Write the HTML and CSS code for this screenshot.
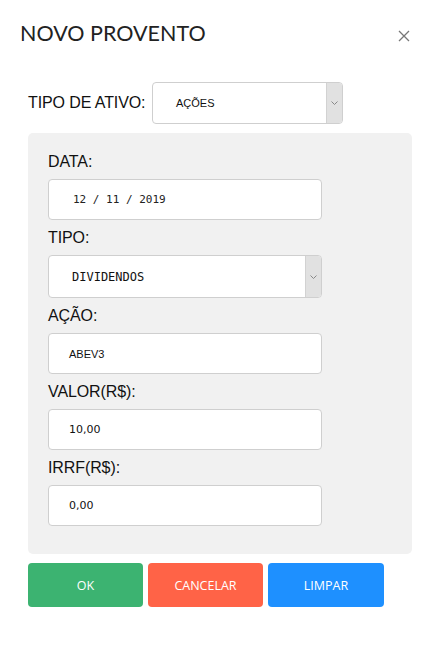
FILE: index.html
```html
<!DOCTYPE html>
<html lang="pt">
<head>
<meta charset="utf-8">
<title>Novo Provento</title>
<link rel="stylesheet" href="styles.css">
</head>
<body>
<div class="modal">
  <header class="head">
    <h1 class="title">NOVO PROVENTO</h1>
    <button class="close" aria-label="Fechar">
      <svg width="12" height="12" viewBox="0 0 12 12"><path d="M1 1L11 11M11 1L1 11" stroke="#777" stroke-width="1.3" fill="none"/></svg>
    </button>
  </header>
  <div class="body">
    <div class="tipo-row">
      <span class="tipo-label">TIPO DE ATIVO:</span>
      <div class="select select-top">
        <span class="select-text sans">AÇÕES</span>
        <span class="arrow"><svg width="7" height="4" viewBox="0 0 7 4"><path d="M0.5 0.5L3.5 3.5L6.5 0.5" stroke="#888" stroke-width="1" fill="none"/></svg></span>
      </div>
    </div>
    <section class="panel">
      <label class="lbl">DATA:</label>
      <div class="field date">12 / 11 / 2019</div>
      <label class="lbl">TIPO:</label>
      <div class="select select-panel">
        <span class="select-text mono">DIVIDENDOS</span>
        <span class="arrow"><svg width="7" height="4" viewBox="0 0 7 4"><path d="M0.5 0.5L3.5 3.5L6.5 0.5" stroke="#888" stroke-width="1" fill="none"/></svg></span>
      </div>
      <label class="lbl">AÇÃO:</label>
      <div class="field text-arial">ABEV3</div>
      <label class="lbl">VALOR(R$):</label>
      <div class="field text-num">10,00</div>
      <label class="lbl">IRRF(R$):</label>
      <div class="field text-num last">0,00</div>
    </section>
    <div class="actions">
      <button class="btn ok">OK</button>
      <button class="btn cancel">CANCELAR</button>
      <button class="btn clear">LIMPAR</button>
    </div>
  </div>
</div>
</body>
</html>
```

FILE: styles.css
```css
* { box-sizing: border-box; }
html, body { margin: 0; padding: 0; background: #fff; }
body { font-family: "Liberation Sans", Arial, sans-serif; color: #111; }

.modal { width: 440px; }

.head {
  display: flex;
  justify-content: space-between;
  align-items: flex-start;
  padding: 19px 28px 0 20px;
}
.title {
  margin: 0;
  font-family: Lato, "Open Sans", sans-serif;
  font-weight: 400;
  font-size: 21.5px;
  line-height: 28px;
  color: #222;
}
.close {
  margin-top: 10px;
  width: 16px;
  height: 14px;
  padding: 0;
  border: 0;
  background: none;
  display: flex;
  align-items: center;
  justify-content: center;
}

.body { padding: 0 28px; }

.tipo-row {
  display: grid;
  grid-template-columns: 124px 191px;
  align-items: center;
  margin-top: 35px;
}
.tipo-label {
  font-size: 16px;
  letter-spacing: -0.1px;
  line-height: 20px;
}

.select {
  display: flex;
  align-items: stretch;
  background: #fff;
  border: 1px solid #cfcfcf;
  border-radius: 4px;
  overflow: hidden;
}
.select-top { height: 42px; }
.select-panel { height: 43px; margin-bottom: 8px; }
.select-text {
  flex: 1;
  display: flex;
  align-items: center;
  padding-left: 23px;
  color: #111;
}
.sans { font-family: "Liberation Sans", Arial, sans-serif; font-size: 11px; }
.mono { font-family: "DejaVu Sans Mono", monospace; font-size: 12px; color: #111; }
.arrow {
  width: 16px;
  background: #e1e1e1;
  border-left: 1px solid #d2d2d2;
  display: flex;
  align-items: center;
  justify-content: center;
}

.panel {
  margin-top: 9px;
  background: #f1f1f1;
  border-radius: 5px;
  padding: 19px 20px 28px;
  display: flex;
  flex-direction: column;
  align-items: flex-start;
}
.lbl {
  display: block;
  font-size: 16px;
  letter-spacing: -0.1px;
  line-height: 20px;
  margin-bottom: 7px;
  color: #111;
}
.field, .select-panel { width: 274px; }
.field {
  height: 41px;
  background: #fff;
  border: 1px solid #cfcfcf;
  border-radius: 4px;
  display: flex;
  align-items: center;
  padding-left: 20px;
  margin-bottom: 8px;
  color: #111;
}
.field.last { margin-bottom: 0; }
.date {
  padding-left: 24px;
  font-family: "DejaVu Sans Mono", monospace;
  font-size: 11px;
  color: #222;
}
.text-arial { font-family: "Liberation Sans", Arial, sans-serif; font-size: 11px; }
.text-num { font-family: "DejaVu Sans", Verdana, sans-serif; font-size: 11px; }

.actions {
  display: flex;
  gap: 5px;
  margin-top: 9px;
}
.btn {
  width: 115px;
  height: 44px;
  border: 0;
  border-radius: 4px;
  color: #fff;
  font-family: "Open Sans", sans-serif;
  font-size: 12.5px;
  padding: 0;
}
.btn.clear { width: 116px; }
.ok { background: #3cb371; }
.cancel { background: #ff6347; }
.clear { background: #1e90ff; }
```
